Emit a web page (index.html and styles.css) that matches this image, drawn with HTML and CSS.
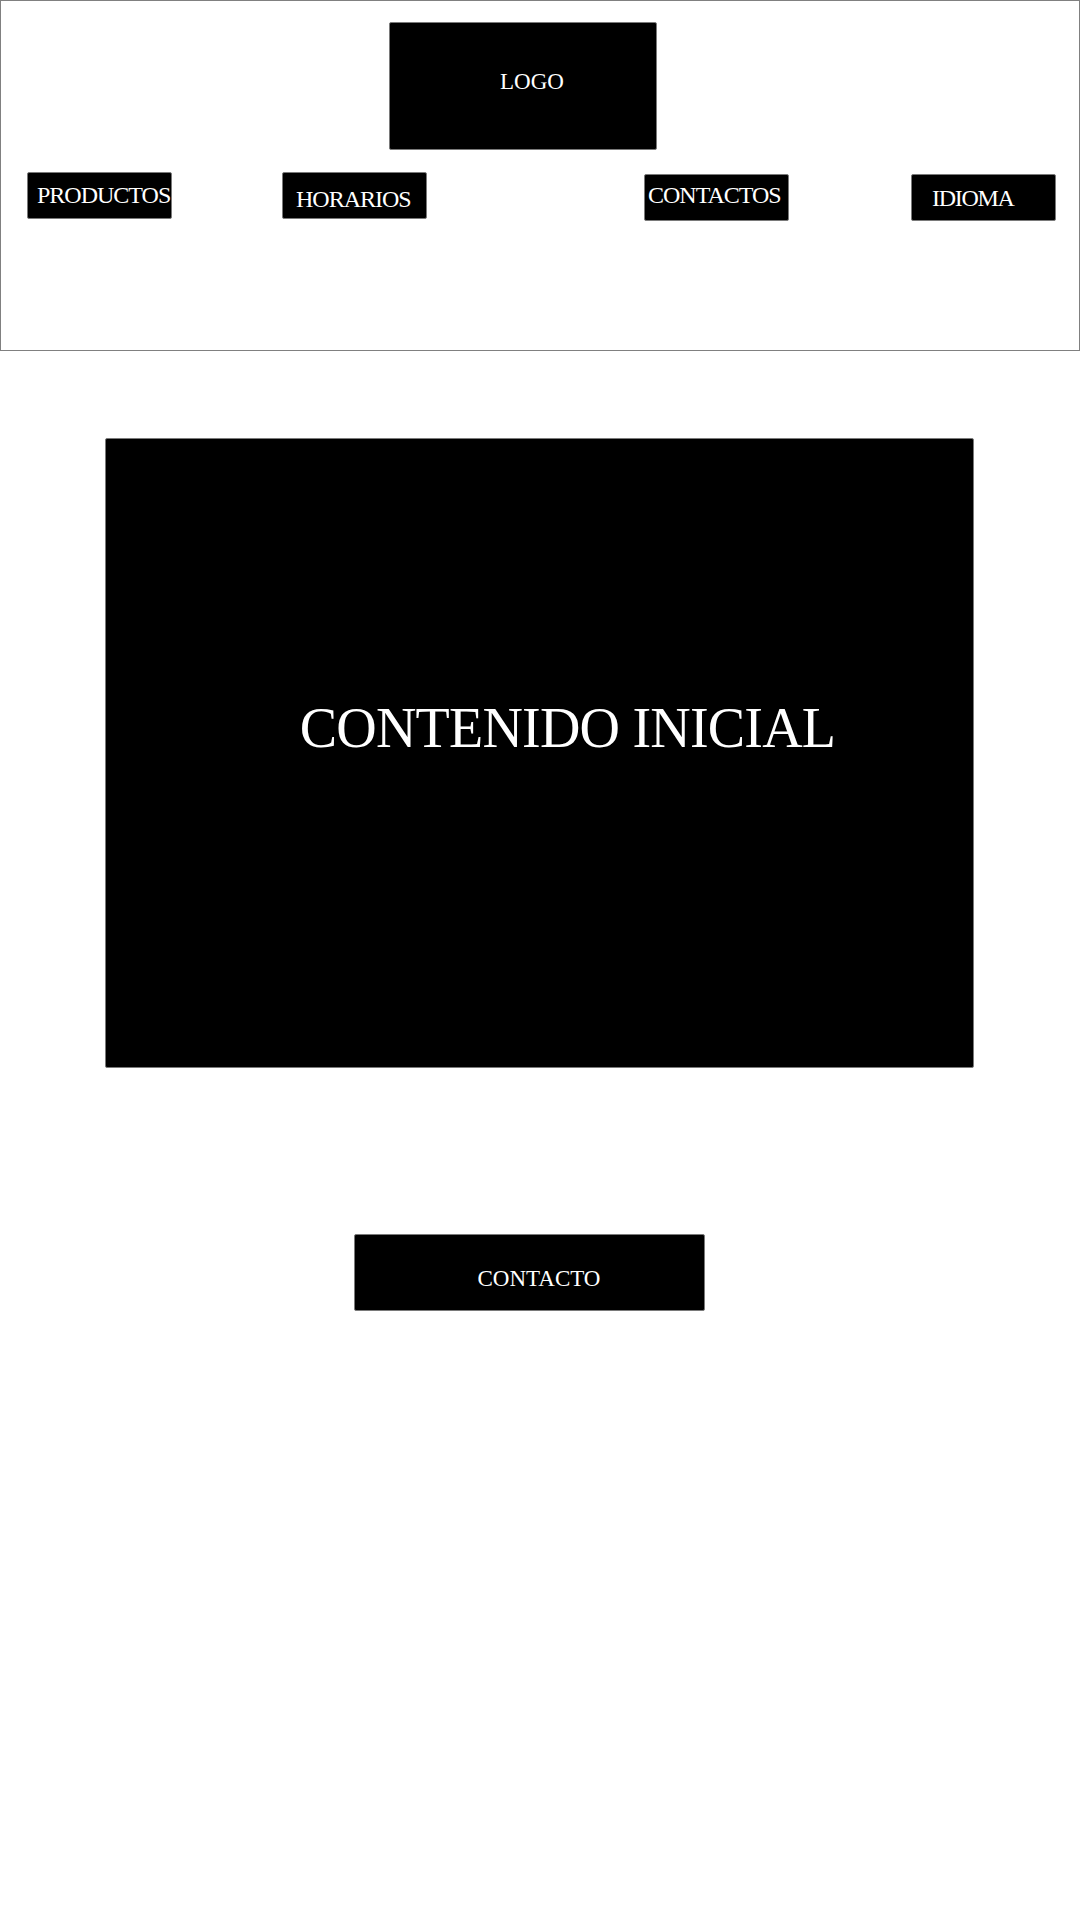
FILE: index.html
```html
<!DOCTYPE html>
<html lang="es">
<head>
<meta charset="utf-8">
<title>Inicio</title>
<link rel="stylesheet" href="styles.css">
</head>
<body>
<header class="site-header">
  <div class="logo">LOGO</div>
  <nav class="nav">
    <a class="nav-btn nav-productos">PRODUCTOS</a>
    <a class="nav-btn nav-horarios">HORARIOS</a>
    <a class="nav-btn nav-contactos">CONTACTOS</a>
    <a class="nav-btn nav-idioma">IDIOMA</a>
  </nav>
</header>
<main class="main">
  <section class="hero">CONTENIDO INICIAL</section>
  <a class="contact-btn">CONTACTO</a>
</main>
</body>
</html>
```
FILE: styles.css
```css
* { box-sizing: border-box; }
html, body { margin: 0; padding: 0; background: #fff; }
body {
  font-family: "Liberation Serif", "Times New Roman", serif;
  color: #fff;
  width: 1080px;
}
.site-header {
  height: 351px;
  border: 1px solid #808080;
  padding-top: 21px;
}
.logo {
  margin-left: 388px;
  width: 268px;
  height: 128px;
  background: #000;
  border: 1px solid #7a7a7a;
  border-radius: 2px;
  font-size: 23px;
  line-height: 1;
  padding-top: 47px;
  padding-left: 110px;
}
.nav {
  display: flex;
  align-items: flex-start;
  margin-top: 22px;
}
.nav-btn {
  display: block;
  height: 47px;
  width: 145px;
  background: #000;
  border: 1px solid #7a7a7a;
  border-radius: 2px;
  font-size: 24px;
  line-height: 1;
  letter-spacing: -1px;
  white-space: nowrap;
  overflow: visible;
}
.nav-productos { margin-left: 26px; padding: 10px 0 0 9px; }
.nav-horarios { margin-left: 110px; padding: 14px 0 0 13px; }
.nav-contactos { margin-left: 217px; margin-top: 2px; padding: 8px 0 0 3px; }
.nav-idioma { margin-left: 122px; margin-top: 2px; padding: 11px 0 0 20px; letter-spacing: -1.3px; }
.main {
  display: flex;
  flex-direction: column;
  align-items: flex-start;
}
.hero {
  margin-top: 87px;
  margin-left: 105px;
  width: 869px;
  height: 630px;
  background: #000;
  border: 1px solid #7a7a7a;
  border-radius: 2px;
  font-size: 56px;
  line-height: 1;
  letter-spacing: -0.8px;
  text-align: center;
  padding-top: 261px;
  padding-left: 56px;
}
.contact-btn {
  display: block;
  margin-top: 166px;
  margin-left: 354px;
  width: 351px;
  height: 77px;
  background: #000;
  border: 1px solid #7a7a7a;
  border-radius: 2px;
  font-size: 23px;
  line-height: 1;
  text-align: center;
  padding-top: 32px;
  padding-left: 19px;
}
```
